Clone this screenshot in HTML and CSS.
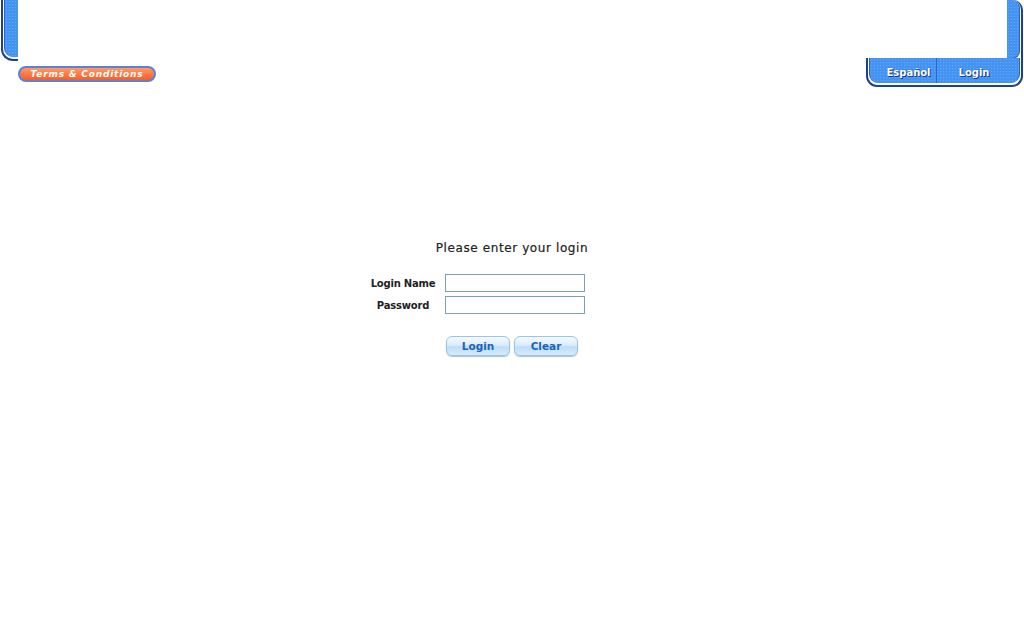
FILE: index.html
```html
<!DOCTYPE html>
<html lang="en">
<head>
<meta charset="utf-8">
<title>Login</title>
<link rel="stylesheet" href="styles.css">
</head>
<body>
<div class="page">
  <div class="header">
    <div class="frame-left"><div class="frame-left-inner"></div></div>
    <div class="header-content"></div>
    <div class="frame-right"><div class="frame-right-inner"></div></div>
  </div>
  <div class="subbar">
    <a class="terms" href="#">Terms &amp; Conditions</a>
    <div class="tabs">
      <div class="tabs-inner">
        <a class="tab tab-es" href="#">Español</a>
        <a class="tab tab-login" href="#">Login</a>
      </div>
    </div>
  </div>
  <main class="login">
    <h1 class="login-title">Please enter your login</h1>
    <form class="login-form">
      <div class="fields">
        <label class="field-label" for="ln">Login Name</label>
        <input class="field-input" id="ln" type="text">
        <label class="field-label" for="pw">Password</label>
        <input class="field-input" id="pw" type="password">
      </div>
      <div class="buttons">
        <button type="button" class="btn">Login</button>
        <button type="button" class="btn">Clear</button>
      </div>
    </form>
  </main>
</div>
</body>
</html>
```
FILE: styles.css
```css
html, body {
  margin: 0;
  padding: 0;
  background: #ffffff;
  font-family: "DejaVu Sans", Verdana, sans-serif;
}
.page {
  width: 1024px;
  height: 639px;
  overflow: hidden;
}
.header {
  display: flex;
  height: 61px;
}
.frame-left {
  width: 14px;
  margin-left: 1px;
  border-left: 2px solid #1f3f92;
  border-bottom: 2px solid #1f3f92;
  border-bottom-left-radius: 12px;
  padding: 0 0 2px 1px;
  background: #ffffff;
  box-sizing: content-box;
  height: 57px;
}
.frame-left-inner, .frame-right-inner, .tabs-inner {
  background-color: #4594f2;
  background-image: radial-gradient(circle, rgba(120,180,255,0.55) 0.6px, transparent 0.9px);
  background-size: 3px 3px;
}
.frame-left-inner {
  height: 100%;
  border-left: 1px solid #2a63c4;
  border-bottom-left-radius: 9px;
}
.header-content {
  flex: 1;
  height: 58px;
  background: #ffffff;
}
.frame-right {
  width: 13px;
  margin-right: 1px;
  border-right: 2px solid #1f3f92;
  border-top-right-radius: 10px;
  padding: 0 1px 0 0;
  background: #ffffff;
  height: 61px;
  display: flex;
}
.frame-right-inner {
  flex: 1;
  border-right: 1px solid #2a63c4;
  border-top-right-radius: 8px;
  border-bottom: 1px solid #2a63c4;
  border-bottom-right-radius: 8px;
  height: 58px;
}
.subbar {
  display: flex;
  justify-content: space-between;
  align-items: flex-start;
  margin-top: -3px;
}
.terms {
  display: block;
  margin: 8px 0 0 18px;
  width: 134px;
  height: 12px;
  border: 2px solid #5a83d6;
  border-radius: 9px;
  background: linear-gradient(#ff9a6a 0%, #ff7a45 50%, #f0602a 100%);
  color: #ffffff;
  font-size: 9px;
  font-weight: bold;
  font-style: italic;
  letter-spacing: 0.8px;
  line-height: 12px;
  text-align: center;
  text-decoration: none;
}
.tabs {
  width: 151px;
  margin-right: 1px;
  border: 2px solid #1f3f92;
  border-top: none;
  border-bottom-left-radius: 11px;
  border-bottom-right-radius: 11px;
  padding: 0 1px 2px 1px;
  background: #ffffff;
  height: 25px;
}
.tabs-inner {
  display: flex;
  height: 100%;
  border-left: 1px solid #2a63c4;
  border-right: 1px solid #2a63c4;
  border-bottom-left-radius: 9px;
  border-bottom-right-radius: 9px;
  padding-left: 1px;
}
.tab {
  display: flex;
  align-items: center;
  justify-content: center;
  color: #ffffff;
  font-size: 10px;
  font-weight: bold;
  text-decoration: none;
  text-shadow: 1px 1px 0 #1b3a7a, 0 0 1px #1b3a7a;
  padding-top: 3px;
}
.tab-es {
  width: 66px;
  padding-left: 10px;
  box-sizing: border-box;
  border-right: 1px solid #1f6ad8;
}
.tab-login {
  flex: 1;
  padding-right: 8px;
}
.login {
  display: flex;
  flex-direction: column;
  align-items: center;
  margin-top: 154px;
}
.login-title {
  margin: 0;
  font-size: 12px;
  font-weight: normal;
  color: #222222;
  letter-spacing: 0.6px;
  line-height: 15px;
  -webkit-text-stroke: 0.2px #222222;
}
.login-form {
  display: flex;
  flex-direction: column;
  align-items: center;
  margin-top: 18px;
}
.fields {
  display: grid;
  grid-template-columns: 72px 140px;
  column-gap: 6px;
  row-gap: 4px;
  padding-right: 72px;
  align-items: center;
}
.field-label {
  font-size: 10px;
  font-weight: bold;
  color: #222222;
  text-align: center;
  letter-spacing: -0.2px;
}
.field-input {
  box-sizing: border-box;
  width: 140px;
  height: 18px;
  margin: 0;
  border: 1px solid #7d9ec4;
  padding: 1px 3px;
  font-size: 11px;
  background: #ffffff;
}
.buttons {
  display: flex;
  gap: 4px;
  margin-top: 22px;
}
.btn {
  width: 64px;
  height: 20px;
  margin: 0;
  padding: 0;
  border: 1px solid #9cc4e8;
  border-radius: 6px;
  background: linear-gradient(#f4faff 0%, #dcedfb 45%, #bcdcf6 55%, #d8ecfb 100%);
  box-shadow: 0 1px 1px #a8c0d8;
  color: #1a64c0;
  font-family: "DejaVu Sans", Verdana, sans-serif;
  font-size: 10.5px;
  font-weight: bold;
  cursor: pointer;
}
```
